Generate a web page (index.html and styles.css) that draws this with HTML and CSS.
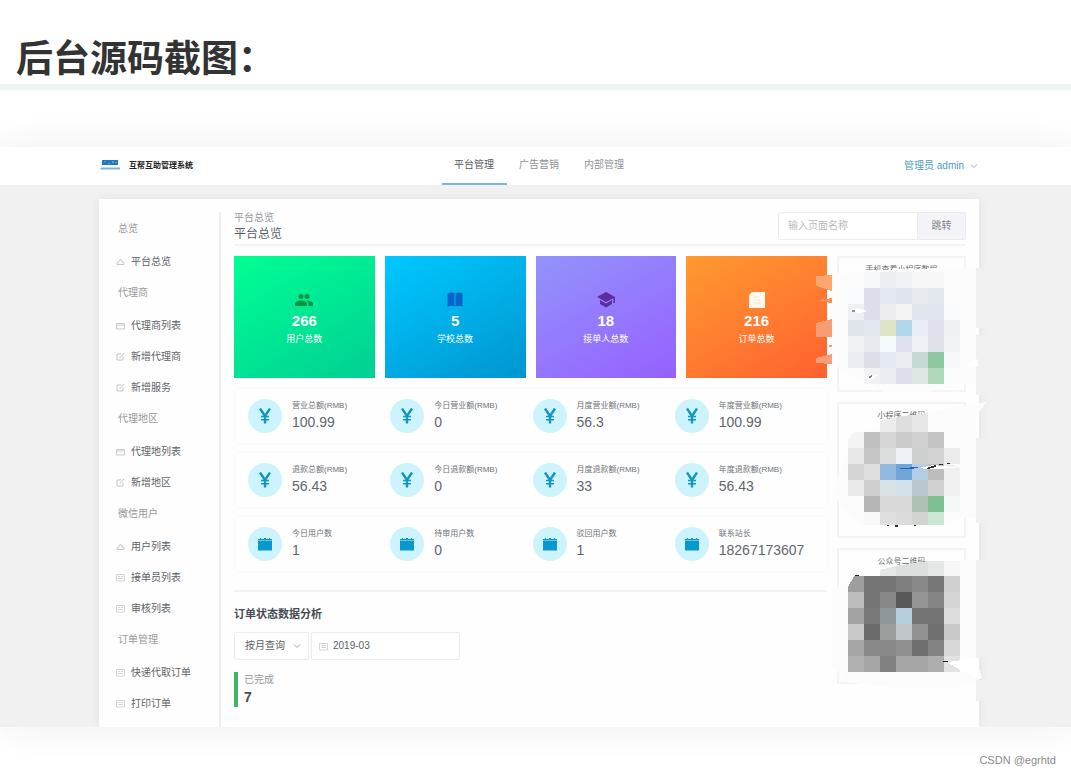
FILE: index.html
```html
<!DOCTYPE html>
<html lang="zh-CN">
<head>
<meta charset="utf-8">
<title>后台源码截图</title>
<link rel="stylesheet" href="styles.css">
</head>
<body>
<svg class="sprite" aria-hidden="true">
  <symbol id="yen" viewBox="0 0 14 16"><path d="M2 .5l5 7.500 5-7.500M7 7v8.500" fill="none" stroke="#1296c2" stroke-width="2.400"/><path d="M3 8.500h8M3 11.700h8" stroke="#1296c2" stroke-width="1.600"/></symbol>
  <symbol id="cal" viewBox="0 0 14 16"><path d="M0 3h2V2h1v1h3V2h2v1h3V2h1v1h2v1.500H0zM0 5h14v9.500H0z" fill="#0899cc"/></symbol>
  <symbol id="s-cloud" viewBox="0 0 9 9"><path d="M1 7.500V5.500l2-1 1-2 2 1v1.500l2 .5v2z" fill="none" stroke="#c4c6ca"/></symbol>
  <symbol id="s-box" viewBox="0 0 9 9"><path d="M.5 2.500h8v5.500h-8zM.5 4h8" fill="none" stroke="#c8cace"/></symbol>
  <symbol id="s-edit" viewBox="0 0 9 9"><path d="M5 2H1v6h6V4.500M3.500 6l4.500-5" fill="none" stroke="#c2c4c8"/></symbol>
  <symbol id="s-list" viewBox="0 0 9 9"><path d="M.5 1.500h8v6.500h-8zM2 3.500h2M5 3.500h2M2 5.500h5" fill="none" stroke="#d4d6d9"/></symbol>
  <symbol id="chev" viewBox="0 0 8 8"><path d="M1 2.500l3 3 3-3" fill="none" stroke="currentColor"/></symbol>
</svg>

<h1 class="title">后台源码截图：</h1>

<section class="app">
  <header class="topbar">
    <div class="brand">
      <svg class="logo" viewBox="0 0 20 12" aria-hidden="true"><path d="M2 0h16v5H2z" fill="#1d78c8"/><path d="M5 1v1M9 3v1M13 1v2M16 2v1" stroke="#8ec3ec"/><path d="M1 7.500h19v2H0z" fill="#78b4d6"/></svg>
      <strong>互帮互助管理系统</strong>
    </div>
    <nav class="tabs">
      <a href="#" class="tab active">平台管理</a>
      <a href="#" class="tab">广告营销</a>
      <a href="#" class="tab">内部管理</a>
    </nav>
    <button class="account" type="button">管理员 admin <svg class="chevron"><use href="#chev"/></svg></button>
  </header>

  <div class="panel">
    <aside class="sidebar">
      <section><h2>总览</h2>
        <a href="#"><svg><use href="#s-cloud"/></svg>平台总览</a></section>
      <section><h2>代理商</h2>
        <a href="#"><svg><use href="#s-box"/></svg>代理商列表</a>
        <a href="#"><svg><use href="#s-edit"/></svg>新增代理商</a>
        <a href="#"><svg><use href="#s-edit"/></svg>新增服务</a></section>
      <section><h2>代理地区</h2>
        <a href="#"><svg><use href="#s-box"/></svg>代理地列表</a>
        <a href="#"><svg><use href="#s-edit"/></svg>新增地区</a></section>
      <section><h2>微信用户</h2>
        <a href="#"><svg><use href="#s-cloud"/></svg>用户列表</a>
        <a href="#"><svg><use href="#s-list"/></svg>接单员列表</a>
        <a href="#"><svg><use href="#s-list"/></svg>审核列表</a></section>
      <section><h2>订单管理</h2>
        <a href="#"><svg><use href="#s-list"/></svg>快递代取订单</a>
        <a href="#"><svg><use href="#s-list"/></svg>打印订单</a></section>
    </aside>

    <main class="main">
      <div class="head">
        <div class="crumb"><span>平台总览</span><h2>平台总览</h2></div>
        <form class="search">
          <input type="text" placeholder="输入页面名称" aria-label="输入页面名称">
          <button type="button">跳转</button>
        </form>
      </div>

      <div class="columns">
        <div class="left">
          <div class="cards">
            <div class="card green">
              <svg viewBox="0 0 20 16"><g fill="#0b9440"><circle cx="7" cy="4.500" r="2.500"/><circle cx="13" cy="4.500" r="2.500"/><path d="M1 14v-2c0-2 3-3.500 6-3.500s6 1.500 6 3.500v2zM13 8.500c3 0 6 1.500 6 3.500v2h-4.500v-2c0-1.500-1-2.800-2.500-3.500z"/></g></svg>
              <b>266</b><span>用户总数</span>
            </div>
            <div class="card blue">
              <svg viewBox="0 0 20 16"><path d="M2.500 1.500C5 .3 7.500.3 9.500 1.500v13c-2-1-4.500-1-7 .5zM10.500 1.500c2-1.200 4.500-1.200 7 0V15c-2.500-1.500-5-1.500-7-.5z" fill="#0764cc"/></svg>
              <b>5</b><span>学校总数</span>
            </div>
            <div class="card purple">
              <svg viewBox="0 0 20 16"><path d="M10 0l9 5v6h-1.500V6.200L10 10 1 5zM4 8l6 3.500L16 8v4l-6 3.500L4 12z" fill="#5c2d9c"/></svg>
              <b>18</b><span>接单人总数</span>
            </div>
            <div class="card orange">
              <svg viewBox="0 0 20 16"><path d="M5 0h13v16H2V3z" fill="#fff8ee"/><path d="M7 5h5M7 8h7M7 11h7" fill="none" stroke="#f8e2cc"/></svg>
              <b>216</b><span>订单总数</span>
            </div>
          </div>

          <div class="stats">
            <div class="stat"><i><svg><use href="#yen"/></svg></i><p><span>营业总额(RMB)</span><b>100.99</b></p></div>
            <div class="stat"><i><svg><use href="#yen"/></svg></i><p><span>今日营业额(RMB)</span><b>0</b></p></div>
            <div class="stat"><i><svg><use href="#yen"/></svg></i><p><span>月度营业额(RMB)</span><b>56.3</b></p></div>
            <div class="stat"><i><svg><use href="#yen"/></svg></i><p><span>年度营业额(RMB)</span><b>100.99</b></p></div>
          </div>
          <div class="stats">
            <div class="stat"><i><svg><use href="#yen"/></svg></i><p><span>退款总额(RMB)</span><b>56.43</b></p></div>
            <div class="stat"><i><svg><use href="#yen"/></svg></i><p><span>今日退款额(RMB)</span><b>0</b></p></div>
            <div class="stat"><i><svg><use href="#yen"/></svg></i><p><span>月度退款额(RMB)</span><b>33</b></p></div>
            <div class="stat"><i><svg><use href="#yen"/></svg></i><p><span>年度退款额(RMB)</span><b>56.43</b></p></div>
          </div>
          <div class="stats">
            <div class="stat"><i><svg><use href="#cal"/></svg></i><p><span>今日用户数</span><b>1</b></p></div>
            <div class="stat"><i><svg><use href="#cal"/></svg></i><p><span>待审用户数</span><b>0</b></p></div>
            <div class="stat"><i><svg><use href="#cal"/></svg></i><p><span>驳回用户数</span><b>1</b></p></div>
            <div class="stat"><i><svg><use href="#cal"/></svg></i><p><span>联系站长</span><b>18267173607</b></p></div>
          </div>

          <section class="analysis">
            <h3>订单状态数据分析</h3>
            <div class="filters">
              <div class="pick"><select aria-label="查询方式"><option>按月查询</option></select><svg class="chevron"><use href="#chev"/></svg></div>
              <div class="date"><svg><use href="#s-list"/></svg><input type="text" value="2019-03" aria-label="月份"></div>
            </div>
            <div class="done"><span>已完成</span><b>7</b></div>
          </section>
        </div>

        <div class="codes">
          <div class="code">手机查看小程序数据</div>
          <div class="code">小程序二维码</div>
          <div class="code">公众号二维码</div>
          <svg class="mosaic" viewBox="808 250 192 460" shape-rendering="crispEdges" aria-hidden="true">
            <g fill="#fcfcfd">
              <path d="M832 275l20-3 22-2 70-2h32v116h-16l-30 8h-46l-22-12-24-12-6-6z"/>
              <path d="M832 492l16-40 16-20 40-14 24-6 58-10-10 16v100h-16l-16 8h-80l-16-10z"/>
              <path d="M832 590l24-10 40-10 36-9h44v97l6 20-26 10h-60l-50-6-14-16z"/>
            </g>
            <path d="M976 268h16v60h-16zM976 335h16v60h-16zM976 438h16v85h-16zM976 560h16v98h-16zM976 680h16v21h-16z" fill="#f0f0f0"/>
            <path d="M816 276l16-1v16l-16-5z" fill="#f9a76f"/>
            <path d="M819 300l13-2v5l-9-1z" fill="#f69059"/>
            <path d="M816 323l16-4v18h-16z" fill="#f79d76"/>
            <path d="M829 345h3v2h-3z" fill="#f89673"/>
            <path d="M816 358l16-4v10l-16-1z" fill="#f89d79"/>
            <path d="M964 365l14-6v8z" fill="#fff"/>

            <path d="M864 272h16v16h-16z" fill="#f7f8fa"/><path d="M880 272h16v16h-16z" fill="#edeef2"/><path d="M896 272h16v16h-16z" fill="#f1f2f5"/><path d="M912 272h32v16h-32z" fill="#f7f7f7"/>
            <path d="M848 288h16v16h-16z" fill="#f8fafd"/><path d="M864 288h16v32h-16z" fill="#dcdfeb"/><path d="M880 288h16v16h-16z" fill="#e4e8f0"/><path d="M896 288h16v16h-16z" fill="#e0e4ec"/><path d="M912 288h16v16h-16z" fill="#e9eaee"/><path d="M928 288h16v16h-16z" fill="#e2e6ed"/>
            <path d="M848 304h16v16h-16z" fill="#eef0f4"/><path d="M880 304h16v16h-16z" fill="#ededf0"/><path d="M896 304h16v16h-16z" fill="#f4f4f5"/><path d="M912 304h32v16h-32z" fill="#e1e5ed"/><path d="M944 304h16v16h-16z" fill="#f9fafb"/>
            <path d="M848 320h16v16h-16z" fill="#e0e4ec"/><path d="M864 320h16v16h-16z" fill="#e3e7f0"/><path d="M880 320h16v16h-16z" fill="#dde5c6"/><path d="M896 320h16v16h-16z" fill="#b2d7eb"/><path d="M912 320h16v16h-16z" fill="#e9edf6"/><path d="M928 320h16v16h-16z" fill="#dee1ed"/><path d="M944 320h16v16h-16z" fill="#eff1f5"/>
            <path d="M848 336h16v16h-16z" fill="#f1f2f3"/><path d="M864 336h16v16h-16z" fill="#e8eaef"/><path d="M880 336h16v16h-16z" fill="#f5fbfb"/><path d="M896 336h16v16h-16z" fill="#dde1ef"/><path d="M912 336h16v16h-16z" fill="#eff0f4"/><path d="M928 336h16v16h-16z" fill="#dfe2e9"/><path d="M944 336h16v16h-16z" fill="#f1f3f7"/>
            <path d="M848 352h16v16h-16z" fill="#ecedf1"/><path d="M864 352h16v16h-16z" fill="#dcdfe8"/><path d="M880 352h16v16h-16z" fill="#e5e9f1"/><path d="M896 352h16v16h-16z" fill="#ecedf1"/><path d="M912 352h16v16h-16z" fill="#c5d8d5"/><path d="M928 352h16v16h-16z" fill="#8fc8a0"/><path d="M944 352h16v16h-16z" fill="#f6f8fb"/>
            <path d="M864 368h16v16h-16z" fill="#f2f2f4"/><path d="M880 368h16v16h-16z" fill="#ecedf2"/><path d="M896 368h16v16h-16z" fill="#dde0ec"/><path d="M912 368h16v16h-16z" fill="#dee7e4"/><path d="M928 368h16v16h-16z" fill="#aed8b8"/>
            <path d="M851 310l5-2 12 3-10 2z" fill="#fff"/><path d="M852 310h3v2h-3z" fill="#8791bd"/><path d="M868 378l10-4-4 5z" fill="#fff"/><path d="M869 376l3-1v2l-3 1z" fill="#7a7da0"/>

            <path d="M880 421l16-4v15h-16z" fill="#ececec"/><path d="M896 417l16-2v17h-16z" fill="#dedede"/><path d="M912 415l16-2v19h-16z" fill="#e6e6e6"/>
            <path d="M848 440l6-8h10v16h-16z" fill="#f4f4f4"/><path d="M864 432h16v16h-16z" fill="#c0c0c0"/><path d="M880 432h16v16h-16z" fill="#d6d6d6"/><path d="M896 432h16v16h-16z" fill="#cbcbcb"/><path d="M912 432h16v16h-16z" fill="#d1d1d1"/><path d="M928 432h16v16h-16z" fill="#c4c4c4"/>
            <path d="M848 448h16v16h-16z" fill="#e8e8e8"/><path d="M864 448h16v16h-16z" fill="#c6c6c6"/><path d="M880 448h16v16h-16z" fill="#dadddb"/><path d="M896 448h16v16h-16z" fill="#edf0f4"/><path d="M912 448h16v16h-16z" fill="#cdd0ce"/><path d="M928 448h16v16h-16z" fill="#d3d3d3"/><path d="M944 448h16v16h-16z" fill="#ebebeb"/>
            <path d="M848 464h16v16h-16z" fill="#d5d5d5"/><path d="M864 464h16v16h-16z" fill="#dfdfdf"/><path d="M880 464h16v16h-16z" fill="#94b9de"/><path d="M896 464h16v16h-16z" fill="#71a5d7"/><path d="M912 464h16v16h-16z" fill="#b4cde3"/><path d="M928 464h16v16h-16z" fill="#bdbdbd"/><path d="M944 464h16v16h-16z" fill="#f0f0f0"/>
            <path d="M848 480h16v16h-16z" fill="#eaeaea"/><path d="M864 480h16v16h-16z" fill="#cfcfcf"/><path d="M880 480h16v16h-16z" fill="#d9e2e5"/><path d="M896 480h16v16h-16z" fill="#d3e2ea"/><path d="M912 480h16v16h-16z" fill="#b9c6d0"/><path d="M928 480h16v16h-16z" fill="#d1d1d1"/><path d="M944 480h16v16h-16z" fill="#f1f1f1"/>
            <path d="M864 496h16v16h-16z" fill="#b6b6b6"/><path d="M880 496h32v16h-32z" fill="#d9d9d9"/><path d="M912 496h16v16h-16z" fill="#aebfb4"/><path d="M928 496h16v16h-16z" fill="#7ec08f"/><path d="M944 496h16v16h-16z" fill="#f4f8f6"/>
            <path d="M864 512h16v13h-16z" fill="#f8f8f8"/><path d="M880 512h16v13h-16z" fill="#dfdfdf"/><path d="M896 512h16v13h-16z" fill="#dbdbdb"/><path d="M912 512h16v13h-16z" fill="#d1d4d1"/><path d="M928 512h16v13h-16z" fill="#cbe7d1"/>
            <path d="M918 468l16-3 26 3-10-4h10v4l-32 1z" fill="#fff"/><path d="M900 468h10v-1h8v1l-8 1h-10z" fill="#156cc2"/><path d="M926 468l10-3v2l-8 2zM939 464h4v1h-4zM947 463h3v1h-3z" fill="#333"/><path d="M887 525h2v1h-2zM895 525h3v2h-3zM914 525h2v1h-2z" fill="#333"/>

            <path d="M880 570l16-4v10h-16z" fill="#e5e7e7"/><path d="M896 566l32-5v15h-32z" fill="#dddfdf"/><path d="M928 561h16v15h-16z" fill="#e5e7e7"/><path d="M944 561h16v15h-16z" fill="#f7f7f7"/>
            <path d="M853 579l2-4h4l-3 6z" fill="#222"/>
            <path d="M848 587l6-11h10v16h-16z" fill="#9e9e9e"/><path d="M864 576h32v16h-32z" fill="#757575"/><path d="M896 576h16v16h-16z" fill="#7f7f7f"/><path d="M912 576h16v16h-16z" fill="#898989"/><path d="M928 576h16v16h-16z" fill="#777"/><path d="M944 576h16v16h-16z" fill="#d0d0d0"/>
            <path d="M848 592h16v16h-16z" fill="#bdbdbd"/><path d="M864 592h16v16h-16z" fill="#757575"/><path d="M880 592h16v16h-16z" fill="#888"/><path d="M896 592h16v16h-16z" fill="#595959"/><path d="M912 592h16v16h-16z" fill="#959595"/><path d="M928 592h16v16h-16z" fill="#858585"/><path d="M944 592h16v16h-16z" fill="#d5d5d5"/>
            <path d="M848 608h16v16h-16z" fill="#a3a3a3"/><path d="M864 608h16v16h-16z" fill="#797979"/><path d="M880 608h16v16h-16z" fill="#90979a"/><path d="M896 608h16v16h-16z" fill="#b6cfdf"/><path d="M912 608h32v16h-32z" fill="#747474"/><path d="M944 608h16v16h-16z" fill="#dcdcdc"/>
            <path d="M848 624h16v16h-16z" fill="#c8c8c8"/><path d="M864 624h16v16h-16z" fill="#6b6b6b"/><path d="M880 624h16v16h-16z" fill="#9b9e9c"/><path d="M896 624h16v16h-16z" fill="#c1c6ca"/><path d="M912 624h16v16h-16z" fill="#929292"/><path d="M928 624h16v16h-16z" fill="#707070"/><path d="M944 624h16v16h-16z" fill="#c9c9c9"/>
            <path d="M848 640h16v16h-16z" fill="#a6a6a6"/><path d="M864 640h32v16h-32z" fill="#898989"/><path d="M896 640h16v16h-16z" fill="#909090"/><path d="M912 640h16v16h-16z" fill="#6e6e6e"/><path d="M928 640h16v16h-16z" fill="#838383"/><path d="M944 640h16v16h-16z" fill="#d8d8d8"/>
            <path d="M848 656h16v16h-16z" fill="#b1b1b1"/><path d="M864 656h16v16h-16z" fill="#a6a6a6"/><path d="M880 656h16v16h-16z" fill="#818181"/><path d="M896 656h32v16h-32z" fill="#a5a5a5"/><path d="M928 656h16v16h-16z" fill="#aeaeae"/><path d="M944 656h16v16h-16z" fill="#e2e2e2"/>
            <path d="M947 662l31-4v20l-18-8z" fill="#fff"/><path d="M943 661h5v1h-5z" fill="#222"/>
          </svg>
        </div>
      </div>
    </main>
  </div>
</section>
<footer class="mark">CSDN @egrhtd</footer>
</body>
</html>
```

FILE: styles.css
```css
* { box-sizing: border-box; }
body {
  margin: 0;
  background: #fff;
  color: #5a5e66;
  font: 10px/14px "Liberation Sans", "Noto Sans CJK SC", sans-serif;
}
h1, h2, h3, p { margin: 0; }
a { color: inherit; text-decoration: none; }
button, input, select { font: inherit; color: inherit; margin: 0; }
.sprite { position: absolute; width: 0; height: 0; }

.title {
  padding: 36px 16px 0;
  border-bottom: 6px solid #eef4f4;
  color: #333;
  font-size: 37px;
  line-height: 48px;
}

.app {
  margin-top: 57px;
  background: #f1f1f1;
  box-shadow: 0 0 36px rgba(0, 0, 0, .07);
}
.topbar {
  display: grid;
  grid-template-columns: 1fr auto 1fr;
  align-items: center;
  height: 38px;
  padding: 0 93px 0 100px;
  background: #fff;
}
.brand { display: flex; align-items: center; gap: 9px; color: #222; font-size: 8px; }
.logo { width: 20px; height: 12px; }
.tabs { display: flex; align-self: stretch; }
.tab {
  width: 65px;
  border-bottom: 2px solid transparent;
  color: #909398;
  line-height: 35px;
  text-align: center;
}
.tab.active { border-color: #7db8d8; color: #56595e; }
.account {
  display: flex;
  align-items: center;
  justify-self: end;
  gap: 6px;
  padding: 0;
  border: 0;
  background: none;
  color: #4a9fbd;
}
.chevron { width: 8px; height: 8px; color: #a0a4aa; }

.panel {
  display: flex;
  margin: 14px 92px 0 99px;
  background: #fefefe;
  box-shadow: 0 0 10px rgba(0, 0, 0, .07);
  clip-path: inset(-14px -14px 0 -14px);
}
.sidebar {
  flex: 0 0 122px;
  margin-top: 13px;
  padding: 1px 0 0 17px;
  border-right: 2px solid #eee;
}
.sidebar h2 {
  margin-bottom: 2px;
  padding-left: 2px;
  color: #999;
  font-size: 10px;
  font-weight: 400;
  line-height: 31px;
}
.sidebar a { display: flex; align-items: center; gap: 6px; height: 31px; color: #5e6268; }
.sidebar svg { width: 9px; height: 9px; }

.main { flex: 1; min-width: 0; padding: 13px 13px 0; }
.head {
  display: flex;
  justify-content: space-between;
  height: 34px;
  border-bottom: 2px solid #f3f3f4;
}
.crumb { line-height: 12px; color: #96999e; }
.crumb span { display: block; }
.crumb h2 { color: #5a5e66; font-size: 12px; font-weight: 400; line-height: 21px; }
.search { display: flex; width: 188px; height: 28px; }
.search input {
  flex: 1;
  min-width: 0;
  padding: 0 9px;
  border: 1px solid #ebecef;
  border-radius: 2px 0 0 2px;
  background: #fff;
}
.search input::placeholder { color: #b8bbc0; }
.search button {
  width: 48px;
  padding: 0;
  border: 1px solid #ebecef;
  border-left: 0;
  border-radius: 0 2px 2px 0;
  background: #f4f4f8;
  color: #80838a;
}

.columns { display: flex; gap: 10px; margin-top: 10px; }
.left { flex: 1; min-width: 0; }
.cards { display: grid; grid-template-columns: repeat(4, 1fr); gap: 10px; }
.card {
  display: flex;
  flex-direction: column;
  align-items: center;
  justify-content: center;
  height: 122px;
  padding-top: 4px;
  color: #fff;
  font-size: 9px;
}
.card svg { width: 20px; height: 16px; }
.card b { margin: 4px 0 2px; font-size: 15px; line-height: 18px; }
.green { background: linear-gradient(150deg, #00ff94, #00cf94); }
.blue { background: linear-gradient(150deg, #00c8ff, #0095d0); }
.purple { background: linear-gradient(150deg, #9393fc, #9660ff); }
.orange { background: linear-gradient(150deg, #ff9a30, #ff6130); }

.stats {
  display: grid;
  grid-template-columns: repeat(4, 1fr);
  height: 54px;
  margin: 10px 0 0 2px;
  padding: 0 10px 0 12px;
  box-shadow: 0 0 4px rgba(0, 0, 0, .04);
}
.cards + .stats { margin-top: 11px; }
.stat { display: flex; align-items: center; gap: 10px; white-space: nowrap; }
.stat i {
  display: flex;
  flex: 0 0 34px;
  align-items: center;
  justify-content: center;
  height: 34px;
  border-radius: 50%;
  background: #cdf3fd;
}
.stat svg { width: 14px; height: 16px; }
.stat p { width: 80px; }
.stat span { display: block; color: #70747a; font-size: 8px; line-height: 12px; }
.stat b { display: block; color: #62666d; font-size: 14px; font-weight: 400; line-height: 20px; }

.analysis { margin-top: 19px; padding-top: 14px; border-top: 2px solid #f3f3f4; }
.analysis h3 { color: #474c55; font-size: 11px; line-height: 16px; }
.filters { display: flex; gap: 2px; margin-top: 10px; }
.pick, .date {
  display: flex;
  align-items: center;
  height: 28px;
  border: 1px solid #ebecef;
  border-radius: 2px;
  background: #fff;
}
.pick { width: 75px; padding: 0 7px 0 10px; }
.pick select { flex: 1; min-width: 0; padding: 0; border: 0; background: none; appearance: none; }
.date { width: 149px; padding: 0 7px; gap: 5px; }
.date svg { width: 9px; height: 9px; }
.date input { flex: 1; min-width: 0; padding: 0; border: 0; background: none; }
.done { margin: 12px 0 20px; padding-left: 6px; border-left: 4px solid #3fb668; }
.done span { display: block; color: #999; line-height: 16px; }
.done b { display: block; color: #4a4d52; font-size: 14px; line-height: 19px; }

.codes { position: relative; display: flex; flex: 0 0 129px; flex-direction: column; gap: 10px; }
.code {
  height: 136px;
  padding-top: 6px;
  border: 2px solid #f5f5f6;
  color: #686b70;
  font-size: 8px;
  line-height: 12px;
  text-align: center;
}
.mosaic { position: absolute; top: -6px; left: -29px; width: 192px; height: 460px; }

.mark {
  padding: 26px 15px 0;
  color: #8a8a8a;
  font-size: 11px;
  text-align: right;
}
```
